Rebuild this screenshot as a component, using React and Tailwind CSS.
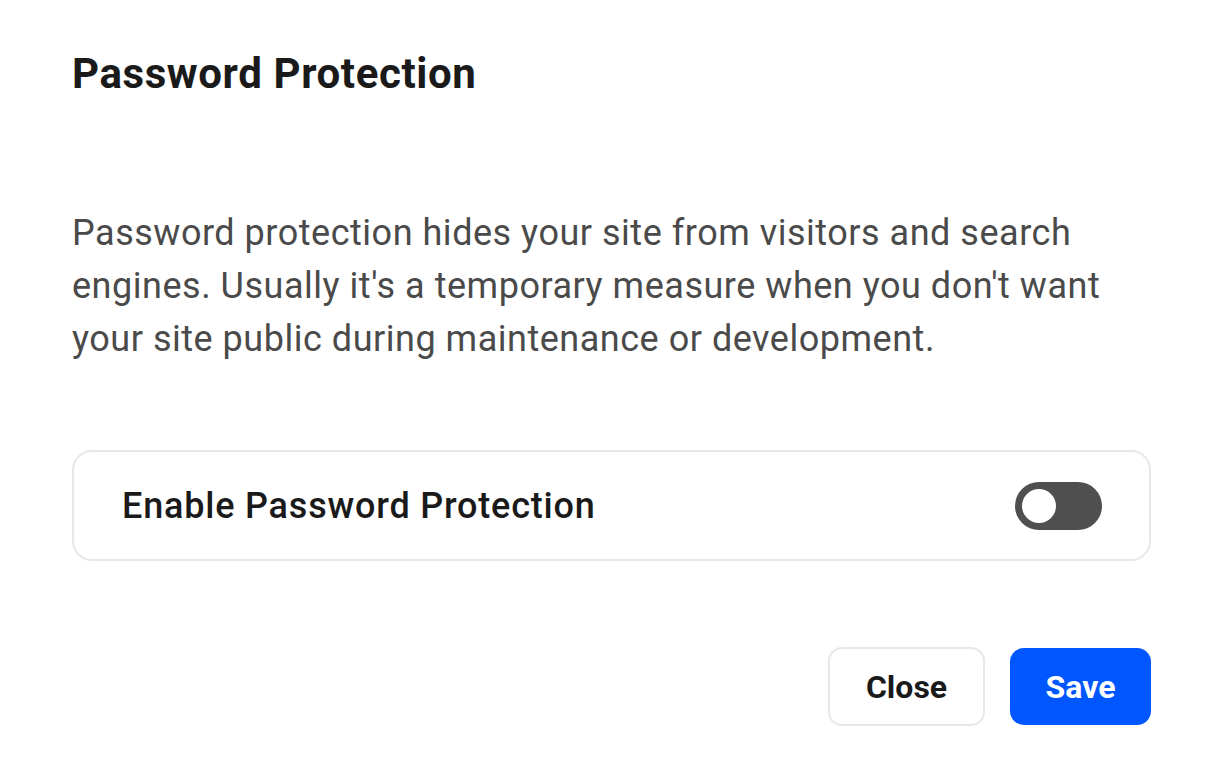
export default function App() {
  return (
    <div className="w-[1220px] h-[759px] bg-white" style={{ fontFamily: "Roboto, 'Noto Sans', sans-serif" }}>
      <div className="pl-[72px] pr-[69px] pt-[50px]">
        <h1 className="text-[42px] leading-[48px] font-bold text-[#1a1a1a] tracking-[0.6px]">Password Protection</h1>
        <p className="mt-[109px] text-[36px] leading-[53px] text-[#4a4a4a] tracking-[0.52px]">
          Password protection hides your site from visitors and search engines. Usually it's a temporary measure when you don't want your site public during maintenance or development.
        </p>
        <div className="mt-[84px] h-[111px] rounded-[20px] border-2 border-[#e8e8e8] flex items-center justify-between pl-[48px] pr-[47px]">
          <span className="text-[36px] leading-[44px] font-medium text-[#1a1a1a] tracking-[0.8px]">Enable Password Protection</span>
          <div className="w-[87px] h-[48px] rounded-full bg-[#4f4f4f] flex items-center pl-[7px]">
            <div className="w-[34px] h-[34px] rounded-full bg-white" />
          </div>
        </div>
        <div className="mt-[86px] flex justify-end items-center gap-[25px]">
          <button className="w-[157px] h-[79px] rounded-[14px] border-2 border-[#e8e8e8] bg-white text-[32px] font-bold text-[#1a1a1a]">Close</button>
          <button className="w-[141px] h-[77px] rounded-[14px] bg-[#0057ff] text-[32px] font-bold text-white">Save</button>
        </div>
      </div>
    </div>
  );
}
